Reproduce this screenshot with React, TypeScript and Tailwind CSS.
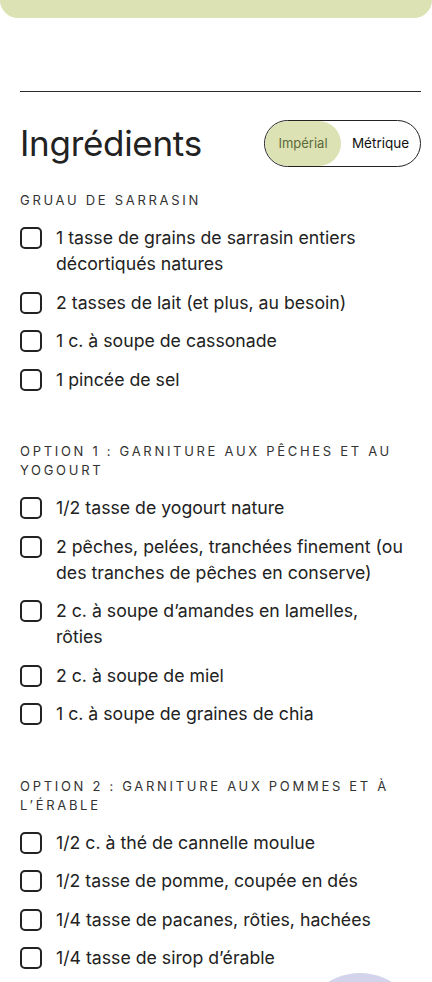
import React from "react";

const sections: { title: string; items: string[][] }[] = [
  {
    title: "Gruau de sarrasin",
    items: [
      ["1 tasse de grains de sarrasin entiers", "décortiqués natures"],
      ["2 tasses de lait (et plus, au besoin)"],
      ["1 c. à soupe de cassonade"],
      ["1 pincée de sel"],
    ],
  },
  {
    title: "Option 1 : Garniture aux pêches et au yogourt",
    items: [
      ["1/2 tasse de yogourt nature"],
      ["2 pêches, pelées, tranchées finement (ou", "des tranches de pêches en conserve)"],
      ["2 c. à soupe d’amandes en lamelles,", "rôties"],
      ["2 c. à soupe de miel"],
      ["1 c. à soupe de graines de chia"],
    ],
  },
  {
    title: "Option 2 : Garniture aux pommes et à l’érable",
    items: [
      ["1/2 c. à thé de cannelle moulue"],
      ["1/2 tasse de pomme, coupée en dés"],
      ["1/4 tasse de pacanes, rôties, hachées"],
      ["1/4 tasse de sirop d’érable"],
    ],
  },
];

export default function App() {
  return (
    <div
      className="relative w-[432px] h-[982px] overflow-hidden bg-white text-[#222]"
      style={{ fontFamily: "Inter, 'Noto Sans', sans-serif" }}
    >
      <div className="h-[18px] bg-[#dce2b3] rounded-b-[20px]" />
      <div className="pl-5 pr-[11px]">
        <div className="mt-[73px] h-px bg-[#2a2a2a]" />
        <div className="mt-[28px] flex items-center justify-between">
          <h2 className="text-[35px] leading-[47px] font-normal tracking-[-0.3px] text-[#222]">
            Ingrédients
          </h2>
          <div className="flex h-[47px] w-[157px] rounded-full border-[1.5px] border-[#222] overflow-hidden">
            <div className="flex w-[76px] items-center justify-center rounded-full bg-[#dce2b3] text-[13px] text-[#5c6a3a]">
              Impérial
            </div>
            <div className="flex flex-1 items-center justify-center text-[13.5px] text-[#111]">
              Métrique
            </div>
          </div>
        </div>
        <div className="mt-[24px] flex flex-col gap-[49.5px]">
          {sections.map((s) => (
            <div key={s.title}>
              <h3 className="text-[13px] leading-[19px] uppercase tracking-[2.7px] text-[#333]">
                {s.title}
              </h3>
              <ul className="mt-[15px] flex flex-col gap-[12.5px]">
                {s.items.map((lines) => (
                  <li key={lines.join(" ")} className="flex items-start gap-[14px]">
                    <span className="mt-[2px] h-[22px] w-[22px] shrink-0 rounded-[5px] border-2 border-[#222]" />
                    <span className="text-[17.7px] leading-[26px] text-[#222]">
                      {lines.map((l, i) => (
                        <span key={i} className="block whitespace-nowrap">
                          {l}
                        </span>
                      ))}
                    </span>
                  </li>
                ))}
              </ul>
            </div>
          ))}
        </div>
      </div>
      <div className="absolute left-[300px] top-[973px] h-[120px] w-[120px] rounded-full bg-[#d3d4ec]" />
    </div>
  );
}
